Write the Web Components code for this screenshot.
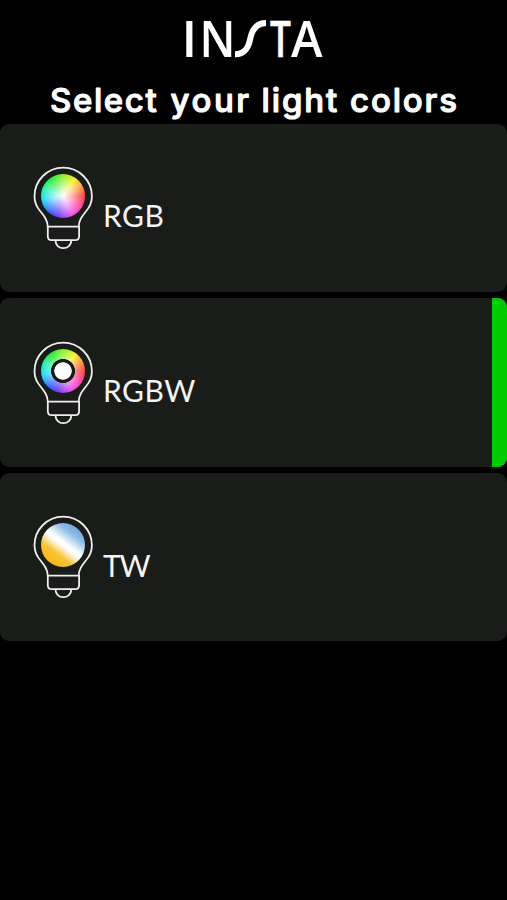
<!DOCTYPE html>
<html lang="en">
<head>
<meta charset="utf-8">
<title>Insta</title>
<style>
    body{
        margin: 0;
        background: #000;
        color: #fff;
        font-family: Lato, sans-serif;
    }
</style>
</head>
<body>
<light-setup></light-setup>

<script>
class InstaLogo extends HTMLElement {
    constructor() {
        super()
        this._shadowDom = this.attachShadow({ mode: 'open' })
    }

    connectedCallback() {
        this._shadowDom.innerHTML = `
            <style>
                :host{
                    display: block;
                    width: 151px;
                    height: 80px;
                }
                svg{
                    display: block;
                }
                text{
                    font: 600 51.5px "Open Sans", sans-serif;
                    fill: #fff;
                }
            </style>
            <svg width="151" height="80" viewBox="178 0 151 80" role="img" aria-label="INSTA">
                <text x="181.500" y="57">I</text>
                <text x="199.500" y="57" textLength="36" lengthAdjust="spacingAndGlyphs">N</text>
                <path d="M235 54.200C245 54.200 248.500 47.500 250.200 38.800C252 30 256 22.900 266 22.900" fill="none" stroke="#fff" stroke-width="6"/>
                <text x="269.900" y="57" textLength="21" lengthAdjust="spacingAndGlyphs" stroke="#fff" stroke-width=".5">T</text>
                <text x="291" y="57" textLength="31.500" lengthAdjust="spacingAndGlyphs">A</text>
            </svg>
        `
    }
}

class LightBulb extends HTMLElement {
    constructor() {
        super()
        this._shadowDom = this.attachShadow({ mode: 'open' })
    }

    connectedCallback() {
        this._shadowDom.innerHTML = `
            <style>
                :host{
                    display: grid;
                    width: 60px;
                    height: 84px;
                    --wheel: conic-gradient(#84f020 0deg, #f4f020 35deg, #ff9035 65deg, #ff3a3c 90deg, #ff3cb0 125deg, #e850f0 155deg, #6638f0 195deg, #3058fa 218deg, #20d8f8 260deg, #18efb0 290deg, #20e830 325deg, #84f020 360deg);
                }
                svg, .disc{
                    grid-area: 1 / 1;
                }
                svg{
                    fill: none;
                    stroke: #eee;
                    stroke-width: 1.8;
                }
                .disc{
                    width: 44px;
                    height: 44px;
                    margin: 8px 0 0 8px;
                    border-radius: 50%;
                    background:
                        radial-gradient(circle closest-side, #fff 0%, rgba(255,255,255,.65) 35%, rgba(255,255,255,0) 100%),
                        var(--wheel);
                }
                :host([type="rgbw"]) .disc{
                    background:
                        radial-gradient(circle closest-side, #fff 38%, #181a18 41%, #181a18 53%, transparent 56%),
                        radial-gradient(circle closest-side, #fff 0%, rgba(255,255,255,.5) 45%, rgba(255,255,255,0) 100%),
                        var(--wheel);
                }
                :host([type="tw"]) .disc{
                    background: linear-gradient(37deg, #f8b810 12%, #f7c338 33%, #fff 49%, #fff 54%, #8fbde6 73%, #659fd4 92%);
                }
            </style>
            <div class="disc"></div>
            <svg width="60" height="84" viewBox="0 0 60 84">
                <path d="M14.800 60.700C14.500 54 11.500 50.500 7.500 45.500C3.500 41 1.500 36 1.500 30.300A28.700 28.700 0 0 1 58.900 30.300C58.900 36 56.900 41 52.900 45.500C48.900 50.500 46 54 45.600 60.700"/>
                <path d="M14.800 60.700H46.100V70.200Q46.100 74.200 42.100 74.200H18.800Q14.800 74.200 14.800 70.200Z"/>
                <path d="M22.500 74.500C22.500 79 26 82.200 30.300 82.200S38.300 79 38.300 74.500"/>
            </svg>
        `
    }
}

class LightOption extends HTMLElement {
    constructor() {
        super()
        this._shadowDom = this.attachShadow({ mode: 'open' })
    }

    connectedCallback() {
        this._shadowDom.innerHTML = `
            <style>
                :host{
                    display: flex;
                    align-items: center;
                    gap: 10px;
                    height: 168.5px;
                    box-sizing: border-box;
                    padding-left: 33px;
                    border-radius: 9px;
                    background: #1a1c1a;
                    overflow: hidden;
                    cursor: pointer;
                }
                .label{
                    flex: 1;
                    padding-top: 14px;
                    font-size: 30px;
                    line-height: 36px;
                    letter-spacing: .5px;
                    color: #f4f4f4;
                }
                :host([type="tw"]) .label{
                    padding-top: 15px;
                    letter-spacing: -1.2px;
                }
                .marker{
                    display: none;
                    align-self: stretch;
                    width: 15.5px;
                    background: #00cb00;
                }
                :host([selected]) .marker{
                    display: block;
                }
            </style>
            <light-bulb type="${this.getAttribute('type')}"></light-bulb>
            <div class="label"><slot></slot></div>
            <div class="marker"></div>
        `
        this.addEventListener('click', () => {
            this.parentNode.querySelectorAll('light-option').forEach(o => o.removeAttribute('selected'))
            this.setAttribute('selected', '')
        })
    }
}

class LightSetup extends HTMLElement {
    constructor() {
        super()
        this._shadowDom = this.attachShadow({ mode: 'open' })
    }

    connectedCallback() {
        this._shadowDom.innerHTML = `
            <style>
                :host{
                    display: flex;
                    flex-direction: column;
                    align-items: center;
                    min-height: 100vh;
                    box-sizing: border-box;
                    background: #000;
                }
                h1{
                    margin: 0;
                    height: 43.8px;
                }
                h1 svg{
                    display: block;
                }
                /* the round joined stroke softens the letter corners */
                h1 text{
                    font: 500 33px Inter, sans-serif;
                    fill: #fff;
                    stroke: #fff;
                    stroke-width: 1.1;
                    stroke-linejoin: round;
                }
                .options{
                    align-self: stretch;
                    display: flex;
                    flex-direction: column;
                    gap: 6px;
                }
            </style>
            <insta-logo></insta-logo>
            <h1>
                <svg width="507" height="43.800" viewBox="0 80 507 43.800">
                    <text y="112"><tspan x="50" textLength="117">Select </tspan><tspan x="170.500" textLength="90">your </tspan><tspan x="261.500" textLength="86.500">light </tspan><tspan x="350" textLength="107">colors</tspan></text>
                </svg>
            </h1>
            <div class="options">
                <light-option type="rgb">RGB</light-option>
                <light-option type="rgbw" selected>RGBW</light-option>
                <light-option type="tw">TW</light-option>
            </div>
        `
    }
}

window.customElements.define('insta-logo', InstaLogo)
window.customElements.define('light-bulb', LightBulb)
window.customElements.define('light-option', LightOption)
window.customElements.define('light-setup', LightSetup)
</script>
</body>
</html>
